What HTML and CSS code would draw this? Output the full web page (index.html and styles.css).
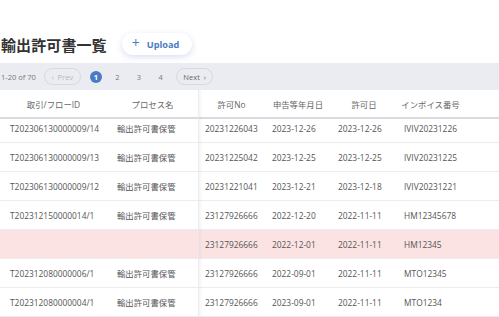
FILE: index.html
```html
<!DOCTYPE html>
<html lang="ja">
  <head>
    <meta charset="UTF-8" />
    <meta name="viewport" content="width=device-width, initial-scale=1.0" />
    <title>輸出許可書一覧</title>
    <link rel="stylesheet" href="styles.css">
  </head>
  <body>
    <main>
      <div class="toolbar">
        <h1 class="title">輸出許可書一覧</h1>
        <button class="upload"><span class="upload__plus">+</span>Upload</button>
      </div>
      <div class="pager">
        <span class="pager__count">1-20 of 70</span>
        <span class="pager__btn pager__btn_disabled">&lsaquo;&nbsp;&nbsp;Prev</span>
        <span class="pager__page pager__page_active">1</span>
        <span class="pager__page">2</span>
        <span class="pager__page">3</span>
        <span class="pager__page">4</span>
        <span class="pager__btn">Next&nbsp;&nbsp;&rsaquo;</span>
      </div>
      <div class="grid">
        <div class="row row_head">
          <div class="cell">取引/フローID</div>
          <div class="cell">プロセス名</div>
          <div class="cell">許可No</div>
          <div class="cell">申告等年月日</div>
          <div class="cell">許可日</div>
          <div class="cell">インボイス番号</div>
          <div class="cell"></div>
        </div>
        <div class="body">
          <div class="row row_first">
            <div class="cell">T202306130000009/14</div>
            <div class="cell">輸出許可書保管</div>
            <div class="cell">20231226043</div>
            <div class="cell">2023-12-26</div>
            <div class="cell">2023-12-26</div>
            <div class="cell">IVIV20231226</div>
            <div class="cell"></div>
          </div>
          <div class="row">
            <div class="cell">T202306130000009/13</div>
            <div class="cell">輸出許可書保管</div>
            <div class="cell">20231225042</div>
            <div class="cell">2023-12-25</div>
            <div class="cell">2023-12-25</div>
            <div class="cell">IVIV20231225</div>
            <div class="cell"></div>
          </div>
          <div class="row">
            <div class="cell">T202306130000009/12</div>
            <div class="cell">輸出許可書保管</div>
            <div class="cell">20231221041</div>
            <div class="cell">2023-12-21</div>
            <div class="cell">2023-12-18</div>
            <div class="cell">IVIV20231221</div>
            <div class="cell"></div>
          </div>
          <div class="row">
            <div class="cell">T202312150000014/1</div>
            <div class="cell">輸出許可書保管</div>
            <div class="cell">23127926666</div>
            <div class="cell">2022-12-20</div>
            <div class="cell">2022-11-11</div>
            <div class="cell">HM12345678</div>
            <div class="cell"></div>
          </div>
          <div class="row row_warn">
            <div class="cell"></div>
            <div class="cell"></div>
            <div class="cell">23127926666</div>
            <div class="cell">2022-12-01</div>
            <div class="cell">2022-11-11</div>
            <div class="cell">HM12345</div>
            <div class="cell"></div>
          </div>
          <div class="row">
            <div class="cell">T202312080000006/1</div>
            <div class="cell">輸出許可書保管</div>
            <div class="cell">23127926666</div>
            <div class="cell">2022-09-01</div>
            <div class="cell">2022-11-11</div>
            <div class="cell">MTO12345</div>
            <div class="cell"></div>
          </div>
          <div class="row">
            <div class="cell">T202312080000004/1</div>
            <div class="cell">輸出許可書保管</div>
            <div class="cell">23127926666</div>
            <div class="cell">2023-09-01</div>
            <div class="cell">2022-11-11</div>
            <div class="cell">MTO1234</div>
            <div class="cell"></div>
          </div>
        </div>
        <div class="grid__shadow"></div>
      </div>
    </main>
  </body>
</html>
```

FILE: styles.css
```css
:root {
  --text-color: #555;
  --muted-color: #888;
  --blue-color: #4a7cc3;
  --bar-color: #ebecf1;
  --line-color: #ececef;
  --warn-color: #fbe3e3;
}

* {
  box-sizing: border-box;
  margin: 0;
  padding: 0;
}
body {
  font-family: "Open Sans", "Noto Sans CJK JP", sans-serif;
  color: var(--text-color);
  background-color: #fff;
  overflow: hidden;
}
main {
  width: 499px;
  height: 317px;
  display: flex;
  flex-direction: column;
}

.toolbar {
  display: flex;
  align-items: center;
  gap: 15px;
  height: 63px;
  padding: 25px 0 0 1px;
}
.title {
  font-family: "Noto Sans CJK JP", sans-serif;
  font-size: 15px;
  font-weight: 700;
  color: #333;
  letter-spacing: 0.1px;
}
.upload {
  height: 22px;
  width: 70px;
  border: none;
  border-radius: 11px;
  background-color: #fff;
  box-shadow: 0 2px 6px rgba(74, 110, 190, 0.22);
  color: var(--blue-color);
  font-family: "Open Sans", sans-serif;
  font-size: 9.2px;
  font-weight: 700;
  display: flex;
  align-items: center;
  padding-left: 10px;
  gap: 7px;
}
.upload__plus {
  font-size: 14px;
  font-weight: 400;
  line-height: 1;
  margin-top: -2px;
}

.pager {
  height: 27px;
  background-color: var(--bar-color);
  display: flex;
  align-items: center;
  padding-left: 1px;
  font-size: 7.5px;
  color: #777;
}
.pager__count {
  margin-right: 8px;
}
.pager__btn {
  height: 17px;
  width: 37px;
  border: 1px solid #d6d8df;
  border-radius: 9px;
  display: flex;
  align-items: center;
  justify-content: center;
  color: #666;
  font-size: 7.5px;
}
.pager__btn_disabled {
  color: #b5b7bd;
  margin-right: 9px;
}
.pager__page {
  width: 12px;
  height: 12px;
  border-radius: 50%;
  display: flex;
  align-items: center;
  justify-content: center;
  margin-right: 9.6px;
}
.pager__page_active {
  background-color: var(--blue-color);
  color: #fff;
  font-weight: 700;
}

.grid {
  flex: 1;
  position: relative;
  display: flex;
  flex-direction: column;
  overflow: hidden;
}
.body {
  overflow: hidden;
}
.row {
  display: grid;
  grid-template-columns: 107px 91px 67px 66px 66px 67px 1fr;
  height: 29px;
  border-bottom: 1px solid var(--line-color);
  font-size: 8.4px;
}
.row_head {
  border-bottom: 2px solid #d9d9df;
  color: #666;
}
.row_first {
  margin-top: -5px;
}
.row_warn {
  background-color: var(--warn-color);
}
.cell {
  display: flex;
  align-items: center;
  white-space: nowrap;
  padding-left: 7px;
}
.cell:nth-child(-n+2) {
  padding-left: 10px;
}
.row_head .cell {
  justify-content: center;
  padding: 0;
}
.grid__shadow {
  position: absolute;
  top: 0;
  bottom: 0;
  left: 198px;
  width: 5px;
  border-left: 1px solid #ebebee;
  background: linear-gradient(to right, rgba(0, 0, 0, 0.04), rgba(0, 0, 0, 0));
}
```
